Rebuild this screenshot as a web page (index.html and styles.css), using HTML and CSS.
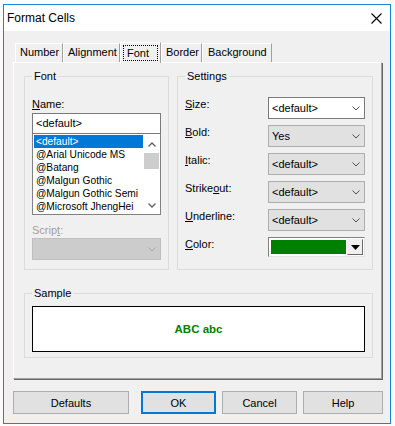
FILE: index.html
```html
<!DOCTYPE html>
<html lang="en">
<head>
  <meta charset="UTF-8">
  <meta name="viewport" content="width=device-width, initial-scale=1.0">
  <title>Format Cells</title>
  <link rel="stylesheet" href="styles.css">
</head>
<body>

  <div class="window">
    <div class="titlebar">
      <span class="title">Format Cells</span>
      <svg class="close" width="11" height="11" viewBox="0 0 11 11">
        <path d="M0.5 0.5L10.5 10.5M10.5 0.5L0.5 10.5" stroke="#000" stroke-width="1.1" fill="none"/>
      </svg>
    </div>

    <div class="tabs">
      <div class="tab tab-number">Number</div>
      <div class="tab tab-alignment">Alignment</div>
      <div class="tab active"><span class="focus">Font</span></div>
      <div class="tab tab-border">Border</div>
      <div class="tab tab-background">Background</div>
    </div>

    <div class="panel">
      <div class="top-row">
        <fieldset class="group font-group">
          <legend>Font</legend>
          <div class="field-label"><u>N</u>ame:</div>
          <div class="textbox">&lt;default&gt;</div>
          <div class="listbox">
            <ul class="items">
              <li class="selected">&lt;default&gt;</li>
              <li>@Arial Unicode MS</li>
              <li>@Batang</li>
              <li>@Malgun Gothic</li>
              <li>@Malgun Gothic Semi</li>
              <li>@Microsoft JhengHei</li>
            </ul>
            <div class="scrollbar">
              <svg width="8" height="5" viewBox="0 0 8 5"><path d="M0.5 4.5L4 1L7.5 4.5" stroke="#606060" stroke-width="1.3" fill="none"/></svg>
              <div class="thumb"></div>
              <svg class="down" width="8" height="5" viewBox="0 0 8 5"><path d="M0.5 0.5L4 4L7.5 0.5" stroke="#606060" stroke-width="1.3" fill="none"/></svg>
            </div>
          </div>
          <div class="field-label disabled script-label">Scrip<u>t</u>:</div>
          <div class="combo disabled">
            <span></span>
            <svg width="8" height="5" viewBox="0 0 8 5"><path d="M0.5 0.5L4 4L7.5 0.5" stroke="#a8a8a8" fill="none"/></svg>
          </div>
        </fieldset>

        <fieldset class="group settings">
          <legend>Settings</legend>
          <div class="settings-grid">
            <div class="setting-label"><u>S</u>ize:</div>
            <div class="combo editable">
              <span>&lt;default&gt;</span>
              <svg width="8" height="5" viewBox="0 0 8 5"><path d="M0.5 0.5L4 4L7.5 0.5" stroke="#505050" fill="none"/></svg>
            </div>

            <div class="setting-label"><u>B</u>old:</div>
            <div class="combo">
              <span>Yes</span>
              <svg width="8" height="5" viewBox="0 0 8 5"><path d="M0.5 0.5L4 4L7.5 0.5" stroke="#505050" fill="none"/></svg>
            </div>

            <div class="setting-label"><u>I</u>talic:</div>
            <div class="combo">
              <span>&lt;default&gt;</span>
              <svg width="8" height="5" viewBox="0 0 8 5"><path d="M0.5 0.5L4 4L7.5 0.5" stroke="#505050" fill="none"/></svg>
            </div>

            <div class="setting-label">Strike<u>o</u>ut:</div>
            <div class="combo">
              <span>&lt;default&gt;</span>
              <svg width="8" height="5" viewBox="0 0 8 5"><path d="M0.5 0.5L4 4L7.5 0.5" stroke="#505050" fill="none"/></svg>
            </div>

            <div class="setting-label"><u>U</u>nderline:</div>
            <div class="combo">
              <span>&lt;default&gt;</span>
              <svg width="8" height="5" viewBox="0 0 8 5"><path d="M0.5 0.5L4 4L7.5 0.5" stroke="#505050" fill="none"/></svg>
            </div>

            <div class="setting-label"><u>C</u>olor:</div>
            <div class="color-combo">
              <div class="swatch"></div>
              <div class="drop-btn">
                <svg width="9" height="5" viewBox="0 0 9 5"><path d="M0 0H9L4.5 5Z" fill="#000"/></svg>
              </div>
            </div>
          </div>
        </fieldset>
      </div>

      <fieldset class="group sample-group">
        <legend>Sample</legend>
        <div class="sample">ABC abc</div>
      </fieldset>
    </div>

    <div class="buttons">
      <button class="btn btn-defaults">Defaults</button>
      <button class="btn btn-ok">OK</button>
      <button class="btn btn-cancel">Cancel</button>
      <button class="btn btn-help">Help</button>
    </div>
  </div>

</body>
</html>
```

FILE: styles.css
```css
body {
  margin: 0;
  padding: 0;
  background-color: #fbfbfb;
  font-family: "Liberation Sans", Arial, sans-serif;
  font-size: 11px;
  color: #000;
}

.window {
  margin: 4px 0 0 3px;
  width: 388px;
  height: 420px;
  box-sizing: border-box;
  border: 1px solid #1883d7;
  background: #f0f0f0;
}

/* title bar */
.titlebar {
  height: 26px;
  background: #fff;
  display: flex;
  align-items: center;
  justify-content: space-between;
  padding: 0 8px 0 3px;
}

.title {
  font-size: 12px;
}

/* tabs */
.tabs {
  display: flex;
  align-items: flex-end;
  height: 20px;
  margin: 11px 0 0 11px;
  position: relative;
  z-index: 1;
}

.tab {
  height: 19px;
  box-sizing: border-box;
  line-height: 17px;
  padding: 0 4px;
  border: 1px solid #fff;
  border-right-color: #a0a0a0;
  border-bottom: none;
  white-space: nowrap;
}

.tab-number { width: 48px; }
.tab-alignment { width: 57px; }
.tab-border { width: 41px; }
.tab-background { width: 70px; padding-left: 5px; }

.tab.active {
  width: 41px;
  height: 21px;
  margin-bottom: -1px;
  padding: 2px 2px 0;
  background: #f0f0f0;
  line-height: 14px;
}

.focus {
  display: block;
  border: 1px dotted #000;
  padding: 0 3px;
  height: 14px;
}

/* tab panel */
.panel {
  margin-left: 9px;
  width: 369px;
  height: 317px;
  box-sizing: border-box;
  border-top: 1px solid #fff;
  border-left: 1px solid #fff;
  border-right: 1px solid #a0a0a0;
  border-bottom: 1px solid #a0a0a0;
  box-shadow: 1px 1px 0 #696969;
  padding: 7px 0 0 10px;
}

.top-row {
  display: flex;
  gap: 8px;
  align-items: stretch;
}

.group {
  margin: 0;
  border: 1px solid #dcdcdc;
  padding: 0 7px;
  min-width: 0;
}

.group legend {
  padding: 0 2px;
  line-height: 13px;
}

/* font group */
.font-group {
  width: 145px;
  box-sizing: border-box;
  padding-top: 15px;
  padding-bottom: 9px;
}

.field-label {
  line-height: 13px;
  margin-bottom: 2px;
}

.field-label.disabled {
  color: #a0a0a0;
}

.script-label {
  margin-top: 9px;
  margin-bottom: 1px;
}

.textbox {
  height: 21px;
  box-sizing: border-box;
  border: 1px solid #7a7a7a;
  background: #fff;
  line-height: 19px;
  padding-left: 3px;
}

.listbox {
  display: flex;
  height: 81px;
  box-sizing: border-box;
  border: 1px solid #828282;
  border-top: none;
  background: #fff;
}

.items {
  list-style: none;
  margin: 0;
  padding: 1px 0 0 1px;
  flex: 1;
  min-width: 0;
  overflow: hidden;
  font-size: 10.2px;
}

.items li {
  height: 13px;
  line-height: 13px;
  padding-left: 2px;
  white-space: nowrap;
  overflow: hidden;
}

.items li.selected {
  background: #0078d7;
  color: #fff;
}

.scrollbar {
  width: 17px;
  flex-shrink: 0;
  display: flex;
  flex-direction: column;
  align-items: center;
  padding-top: 8px;
  box-sizing: border-box;
}

.thumb {
  width: 15px;
  height: 16px;
  background: #cdcdcd;
  margin-top: 6px;
}

.scrollbar .down {
  margin-top: auto;
  margin-bottom: 6px;
}

/* combo boxes */
.combo {
  height: 22px;
  box-sizing: border-box;
  border: 1px solid #adadad;
  background: #e1e1e1;
  display: flex;
  align-items: center;
  justify-content: space-between;
  padding: 0 4px 0 3px;
}

.combo.editable {
  background: #fff;
  border-color: #7a7a7a;
}

.combo.disabled {
  background: #cccccc;
  border-color: #bfbfbf;
}

/* settings group */
.settings {
  width: 196px;
  box-sizing: border-box;
  padding-top: 14px;
  padding-bottom: 8px;
}

.settings-grid {
  display: grid;
  grid-template-columns: 1fr 97px;
  grid-auto-rows: 22px;
  row-gap: 6px;
}

.setting-label {
  line-height: 13px;
  margin-top: 1px;
}

.color-combo {
  height: 20px;
  box-sizing: border-box;
  border: 1px solid #828282;
  border-right-color: #e3e3e3;
  border-bottom-color: #e3e3e3;
  background: #fff;
  display: flex;
  padding: 2px 1px 1px 2px;
  gap: 1px;
}

.swatch {
  flex: 1;
  background: #008000;
  margin-bottom: 1px;
}

.drop-btn {
  width: 16px;
  margin-top: -1px;
  box-sizing: border-box;
  border: 1px solid #f0f0f0;
  border-right-color: #696969;
  border-bottom-color: #696969;
  background: #f0f0f0;
  display: flex;
  align-items: center;
  justify-content: center;
}

/* sample */
.sample-group {
  width: 349px;
  box-sizing: border-box;
  margin-top: 17px;
  padding-top: 6px;
  padding-bottom: 5px;
}

.sample {
  height: 46px;
  box-sizing: border-box;
  border: 1px solid #000;
  background: #fff;
  display: flex;
  align-items: center;
  justify-content: center;
  color: #008000;
  font-weight: bold;
  font-size: 11.5px;
}

/* dialog buttons */
.buttons {
  display: flex;
  gap: 6px;
  margin: 12px 0 0 9px;
}

.btn {
  height: 23px;
  box-sizing: border-box;
  border: 1px solid #adadad;
  background: #e1e1e1;
  font-family: inherit;
  font-size: 11px;
  color: #000;
  padding: 0;
}

.btn-defaults {
  width: 116px;
  margin-right: 6px;
}

.btn-ok {
  width: 75px;
  border: 2px solid #0078d7;
}

.btn-cancel {
  width: 75px;
}

.btn-help {
  width: 80px;
}
```
